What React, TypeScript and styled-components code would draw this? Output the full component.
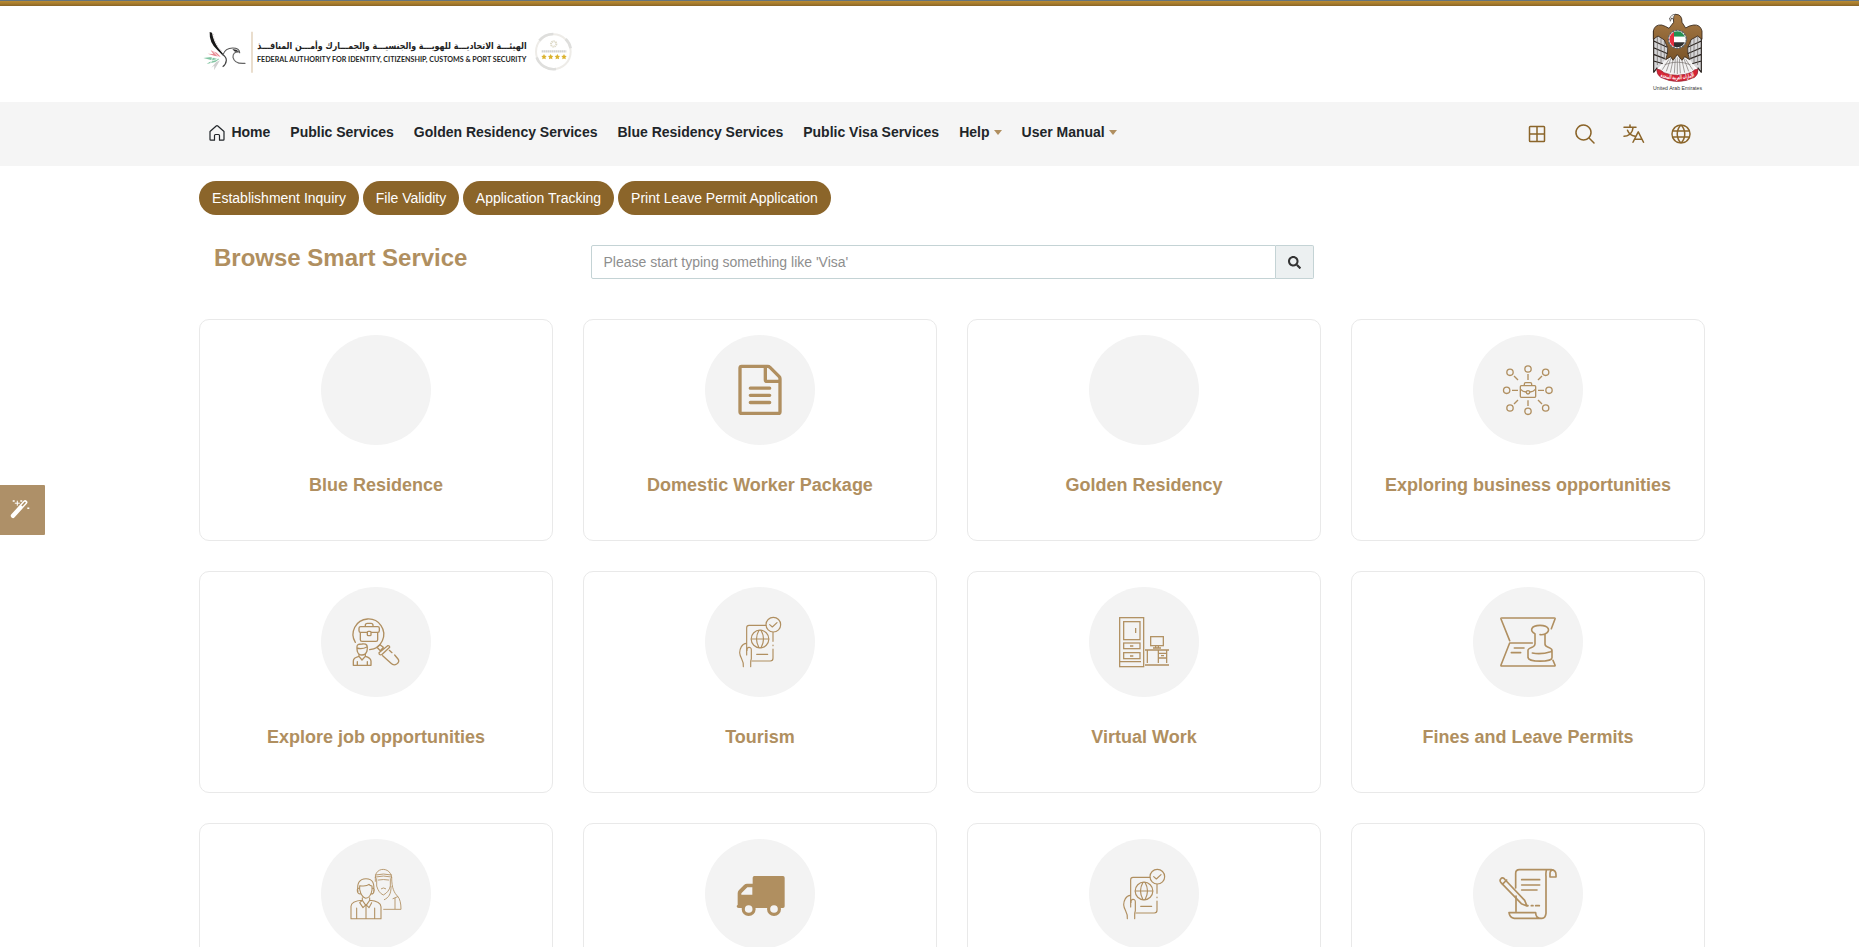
import React from "react";
import styled, { createGlobalStyle } from "styled-components";
import { FaSearch } from "react-icons/fa";
import { PiGlobe, PiGridFour, PiMagnifyingGlass, PiTranslate } from "react-icons/pi";

const GOLD = "#b08f60";
const BRONZE = "#8b652a";

const GlobalStyle = createGlobalStyle`
  *, *::before, *::after { box-sizing: border-box; }
  html, body { margin: 0; height: 100%; overflow: hidden; background: #fff; }
  body { font-family: "Liberation Sans", Arial, sans-serif; color: #212529; }
`;

const Page = styled.div`
  height: 947px;
  overflow: hidden;
  position: relative;
`;

const TopBar = styled.div`
  height: 6px;
  border-top: 1px solid #66747c;
  background: linear-gradient(#b98c35, #a67a2b 55%, #87642a);
`;

const Header = styled.header`
  height: 96px;
  padding: 0 154px 0 199px;
  display: flex;
  justify-content: space-between;
`;

const AuthorityLogo = styled.svg`
  width: 380px;
  height: 60px;
  margin-top: 14px;
`;

const Emblem = styled.svg`
  width: 56px;
  height: 84px;
  margin-top: 4px;
`;

const NavBar = styled.nav`
  height: 64px;
  background: #f5f5f5;
  padding: 0 166px 0 209px;
  display: flex;
  justify-content: space-between;
`;

const NavLinks = styled.div`
  display: flex;
  gap: 20px;
  height: 60px;
  align-items: center;
`;

const NavLink = styled.a`
  display: flex;
  align-items: center;
  font-size: 14px;
  font-weight: 700;
  color: #212529;
  white-space: nowrap;
`;

const HomeIcon = styled.svg`
  width: 16px;
  height: 16px;
  margin-right: 6.4px;
  margin-top: 2px;
`;

const Caret = styled.span`
  margin-left: 4px;
  border: 4.5px solid transparent;
  border-top: 5px solid ${GOLD};
  border-bottom: 0;
`;

const NavTools = styled.div`
  display: flex;
  align-items: center;
  gap: 24px;
  padding-bottom: 1px;
  height: 64px;
  color: ${BRONZE};
  svg { width: 24px; height: 24px; }
`;

const Content = styled.main`
  padding: 15px 154px 0 199px;
`;

const Pills = styled.div`
  display: flex;
  gap: 4px;
`;

const Pill = styled.button<{ $w: number }>`
  width: ${(p) => p.$w}px;
  height: 34px;
  border: 0;
  border-radius: 17px;
  padding: 0;
  background: ${BRONZE};
  color: #fff;
  font: 14px "Liberation Sans", Arial, sans-serif;
  white-space: nowrap;
`;

const Browse = styled.div`
  display: flex;
  margin-top: 30px;
  height: 34px;
`;

const Title = styled.h1`
  margin: 0;
  width: 392px;
  padding-left: 15px;
  font-size: 24px;
  line-height: 26px;
  color: ${GOLD};
`;

const SearchInput = styled.input`
  width: 685px;
  height: 34px;
  border: 1px solid #c4d3d5;
  border-radius: 2px 0 0 2px;
  padding: 0 12px 0 11.5px;
  font: 14px "Liberation Sans", Arial, sans-serif;
  &::placeholder { color: #8e8e8e; opacity: 1; }
`;

const SearchButton = styled.button`
  width: 38px;
  height: 34px;
  border: 1px solid #c4d3d5;
  border-left: 0;
  border-radius: 0 2px 2px 0;
  background: #ecf0f1;
  color: #333;
  padding: 0 1px 0 0;
  display: flex;
  align-items: center;
  justify-content: center;
  font-size: 13px;
`;

const Grid = styled.section`
  margin-top: 40px;
  display: grid;
  grid-template-columns: repeat(4, 354px);
  grid-auto-rows: 222px;
  gap: 30px;
`;

const Card = styled.article`
  border: 1px solid #e9e9e9;
  border-radius: 10px;
  padding-top: 15px;
  display: flex;
  flex-direction: column;
  align-items: center;
`;

const IconDisc = styled.div`
  width: 110px;
  height: 110px;
  border-radius: 50%;
  background: #f3f3f3;
  svg { display: block; width: 110px; height: 110px; }
`;

const CardTitle = styled.h2`
  margin: 29px 0 0;
  font-size: 18px;
  line-height: 22px;
  color: ${GOLD};
  white-space: nowrap;
`;

const SideTool = styled.button`
  position: absolute;
  left: 0;
  top: 485px;
  width: 45px;
  height: 50px;
  border: 0;
  border-radius: 0 1px 1px 0;
  background: #ae9068;
  padding: 0;
  svg { display: block; width: 45px; height: 50px; }
`;

type LineProps = { box: string; width?: number; children: React.ReactNode };
const LineIcon = ({ box, width = 4, children }: LineProps) => (
  <svg viewBox={box} fill="none" stroke={GOLD} strokeWidth={width} strokeLinecap="round" strokeLinejoin="round">
    {children}
  </svg>
);

const FileIcon = () => (
  <LineIcon box="15 45 330 330" width={10}>
    <path d="M125 139H203Q207 139 210 142L237 169Q240 172 240 176V275Q240 280 235 280H125Q120 280 120 275V144Q120 139 125 139Z" />
    <path d="M196 141V179Q196 184 201 184H238M151 204.500H209M151 226H209M151 247.500H209" />
  </LineIcon>
);

const BusinessIcon = () => (
  <LineIcon box="-21 15 330 330">
    {[[144, 117], [197, 127], [207, 181], [197, 234], [144, 244], [90, 234], [80, 181], [90, 127]].map(([x, y]) => (
      <circle key={`${x}-${y}`} cx={x} cy={y} r="9.500" />
    ))}
    <path strokeLinecap="butt" d="M144 132V150M144 211V228M96 181H114M174 181H192M102 138L114 150M186 138L174 150M102 222L114 210M186 222L174 210" />
    <rect x="121" y="167" width="46" height="35" rx="3" />
    <path d="M133 165V162Q133 158 137 158H151Q155 158 155 162V165M122 178Q128 185 138 186M166 178Q160 185 150 186" />
    <circle cx="144" cy="187" r="5" />
  </LineIcon>
);

const JobIcon = () => (
  <LineIcon box="33 21 330 330">
    <path d="M136 187A46 46 0 1 1 217 182M217 182Q205 207 179 209" />
    <rect x="147" y="140" width="61" height="17" rx="5" />
    <path d="M151 158V179Q151 184 156 184H198Q203 184 203 179V158M166 139V136Q166 130 172 130H183Q189 130 189 136V139" />
    <rect x="172" y="154" width="11" height="13" rx="3" fill="#f3f3f3" />
    <path d="M142 214C138 192 144 192 156 192C170 190 174 195 171 213C168 222 162 225 156 225C150 225 144 221 142 214ZM141 204Q155 209 171 201" />
    <path d="M147 223V229Q130 233 130 243V256H183V243Q182 233 166 229V223M147 229L156 240L166 229M142 245V256M172 245V256" />
    <path d="M201 202L210 194L220 202L211 212ZM207 218L233 197Q239 196 239 202L215 224Q207 226 207 218M218 227L243 250Q251 258 260 252Q270 245 264 237L254 225M238 211L246 218" />
  </LineIcon>
);

const PassportIcon = () => (
  <LineIcon box="15 21 330 330" width={3.5}>
    <path d="M140 225V143Q140 136 147 136H198M219 157V184M219 195V197M219 207V235Q219 243 211 243H156M170 223H203" />
    <circle cx="180" cy="177" r="26.500" />
    <path d="M154 177H206M177 151Q162 177 177 203M183 151Q198 177 183 203" />
    <circle cx="220" cy="134" r="22" />
    <path d="M209 134L217 141L231 128" />
    <path d="M139 190C126 190 119 207 119 218C120 235 132 239 130 260M141 211C139 200 154 199 154 209V236C150 246 153 252 152 260" />
  </LineIcon>
);

const OfficeIcon = () => (
  <LineIcon box="27 21 330 330" width={3.8}>
    <g strokeLinejoin="miter" strokeLinecap="butt">
      <rect x="119" y="113" width="72" height="147" />
      <rect x="131" y="125" width="49" height="54" />
      <rect x="131" y="189" width="49" height="17" />
      <rect x="131" y="218" width="49" height="18" />
      <path d="M167 144V159M150 198H160M150 228H160M120 245H183M195 210H267M195 255H267M202 212V249M235 212V249M260 212V249M236 220H259M236 234H259M243 227H252" />
      <rect x="212" y="170" width="38" height="27" />
      <path d="M227 198V203M235 198V203M219 204H243" />
    </g>
  </LineIcon>
);

const StampIcon = () => (
  <LineIcon box="39 21 330 330" width={4.8}>
    <path d="M149 182L123 117Q122 114 125 114H283Q286 114 285 117L274 146M217 189H149L123 255Q122 258 125 258H283Q286 258 285 255L279 241M163 204H192M154 218H182" />
    <path d="M225 161C208 154 212 136 240 136C268 136 273 154 255 162Q248 165 240 164M225 162V192Q225 198 218 201C209 204 204 207 204 211V233C205 247 276 247 276 233V211C276 207 271 204 263 201Q255 198 255 192V162M217 219Q244 224 272 215Q277 213 275 208" />
  </LineIcon>
);

const PeopleIcon = () => (
  <LineIcon box="0 0 330 330" width={3.2}>
    <path d="M111 159C107 135 114 119 135 119C156 119 161 134 158 159M116 151V140Q137 143 144 136Q147 140 153 141V153Q149 176 134 178Q121 174 116 151M115 148Q108 146 109 156Q110 165 118 165M154 148Q162 147 159 157Q158 165 151 165" />
    <path d="M124 176V184Q91 186 90 202V239H180V203Q179 187 146 184V176M124 184L135 200L146 184M124 184L116 191L126 206L135 197L144 206L152 191M135 201V238M107 207V238M161 207V238" />
    <g strokeWidth="2.600">
      <path d="M163 116C161 83 210 82 212 116M163 108Q187 102 212 108M163 114Q187 108 212 114" />
      <path d="M167 119V141Q173 162 187 168Q204 159 208 141V119M172 123Q187 120 203 123M181 149Q187 144 194 149M163 116V127M212 116C212 148 220 162 230 172Q240 183 240 211H188M210 142C211 165 203 176 190 182M222 178V209M230 173L216 179" />
    </g>
  </LineIcon>
);

const TruckIcon = () => (
  <svg viewBox="0 0 330 330">
    <path fill={GOLD} fillRule="evenodd" d="M148 111H234Q239 111 239 116V202Q239 207 234 207H101Q95 207 95 202Q95 199 98 198V163Q98 157 102 153L117 138Q121 134 126 134H143V116Q143 111 148 111ZM142 145H127L109 163V167H142Z" />
    <circle cx="131" cy="210" r="21" fill={GOLD} />
    <circle cx="207" cy="210" r="21" fill={GOLD} />
    <circle cx="131" cy="210" r="11.500" fill="#f3f3f3" />
    <circle cx="207" cy="210" r="11.500" fill="#f3f3f3" />
  </svg>
);

const ScrollIcon = () => (
  <LineIcon box="0 0 330 330" width={5}>
    <path d="M128 147V103Q128 92 139 92H235Q249 94 249 107V114H231V106Q230 93 242 93M129 171V217M220 94Q218 103 219 112V223Q217 238 207 238H124Q110 236 108 221H188Q188 237 204 238" />
    <path d="M146 122H200M146 138H200M146 153H192M163 200H165M175 200H180M188 200H199" />
    <path d="M83 120Q89 112 97 123L155 184L162 201L145 194L84 131Q79 125 83 120ZM88 136L101 123" />
  </LineIcon>
);

const cards: { title: string; icon?: React.ReactNode }[] = [
  { title: "Blue Residence" },
  { title: "Domestic Worker Package", icon: <FileIcon /> },
  { title: "Golden Residency" },
  { title: "Exploring business opportunities", icon: <BusinessIcon /> },
  { title: "Explore job opportunities", icon: <JobIcon /> },
  { title: "Tourism", icon: <PassportIcon /> },
  { title: "Virtual Work", icon: <OfficeIcon /> },
  { title: "Fines and Leave Permits", icon: <StampIcon /> },
  { title: "", icon: <PeopleIcon /> },
  { title: "", icon: <TruckIcon /> },
  { title: "", icon: <PassportIcon /> },
  { title: "", icon: <ScrollIcon /> },
];

const Logo = () => (
  <AuthorityLogo viewBox="27 60 1140 180">
    <path fill="#171717" d="M59 96Q57 128 82 150L97 165L99 161L84 143Q70 122 66 98Z" />
    <path fill="none" stroke="#a99" strokeWidth="1.500" strokeDasharray="3 4" d="M70 102Q73 132 98 155" />
    <path fill="none" stroke="#555" strokeWidth="3.500" strokeLinecap="round" d="M99 164C104 150 113 144 128 144Q148 144 149 158" />
    <path fill="none" stroke="#666" strokeWidth="3.500" strokeLinecap="round" d="M147 156Q128 155 129 172Q134 193 165 190" />
    <path fill="none" stroke="#444" strokeWidth="3.500" d="M96 163Q109 170 109 181Q108 193 98 200" />
    <path fill="#333" d="M127 148Q138 146 147 155L135 155Z" />
    <path fill="#e98b93" d="M62 151L80 158L92 170L75 168L53 161L70 162Z" />
    <path fill="#82c5a2" d="M40 174L64 171L88 177L76 186L50 192L66 181Z" />
    <path fill="none" stroke="#fff" strokeWidth="2.500" d="M54 168L84 176M57 185L82 178M69 154L86 171M68 170L62 190" />
    <path fill="#cfcfcf" d="M90 181L82 194L72 211L73 197L64 203L78 187Z" />
    <path stroke="#dfcdb4" strokeWidth="4" d="M186 95V218" />
    <text x="1010" y="147" direction="rtl" textLength="808" lengthAdjust="spacingAndGlyphs" fontFamily="DejaVu Sans, sans-serif" fontWeight="700" fontSize="28" fill="#222">
      الهيئـــة الاتحاديـــة للهويـــة والجنسيـــة والجمـــارك وأمـــن المنافـــذ
    </text>
    <text x="201" y="185" textLength="808" lengthAdjust="spacingAndGlyphs" fontFamily="Lato, sans-serif" fontWeight="700" fontSize="23.500" fill="#262626">
      FEDERAL AUTHORITY FOR IDENTITY, CITIZENSHIP, CUSTOMS &amp; PORT SECURITY
    </text>
    <circle cx="1090" cy="155" r="52" fill="none" stroke="#eeece8" strokeWidth="6" />
    <path fill="none" stroke="#dededc" strokeWidth="8" d="M1048 122A53 53 0 0 1 1090 102M1040 172A53 53 0 0 0 1098 207M1127 117A53 53 0 0 1 1142 145" />
    <circle cx="1091" cy="132" r="8" fill="none" stroke="#dedac8" strokeWidth="6" strokeDasharray="4 2" />
    <path stroke="#d1d1d1" strokeWidth="7" strokeDasharray="5 1" d="M1055 154H1129" />
    {[1062, 1082, 1102, 1122].map((x) => (
      <path key={x} fill="#dbb22e" d={`M${x} 162l2.600 5 5.600 1-4 4 1 6-5.200-2.500-5.200 2.500 1-6-4-4 5.600-1z`} />
    ))}
  </AuthorityLogo>
);

const EmblemArt = () => (
  <Emblem viewBox="447 30 168 252">
    <defs>
      <linearGradient id="wing" x1="0" y1="0" x2="0" y2="1">
        <stop offset="0" stopColor="#a87b46" />
        <stop offset="1" stopColor="#7b5428" />
      </linearGradient>
      <clipPath id="shield"><circle cx="532" cy="118" r="24" /></clipPath>
    </defs>
    <path fill="#d6d6d8" d="M460 93L493 111L507 170L478 200L461 217ZM606 93L572 111L558 170L586 200L604 217Z" />
    <path stroke="#29231f" strokeWidth="3.500" fill="none" d="M461 93V218M461 123L502 142M461 143L503 161M461 163L500 178M461 183L492 192M461 217L472 203M604 93V218M604 123L563 142M604 143L562 161M604 163L565 178M604 183L573 192M604 217L593 203" />
    <path stroke="#66615e" strokeWidth="2" fill="none" d="M472 109V195M483 115V188M493 120V181M593 109V195M582 115V188M572 120V181" />
    <path fill="#f3f3f3" d="M500 166L479 210Q532 236 586 210L565 166Z" />
    <path stroke="#77716e" strokeWidth="2" fill="none" d="M507 178L487 209M513 174L499 214M519 181L511 218M526 175L523 220M532 172V222M538 175L541 220M546 181L554 218M551 174L566 214M557 178L578 209M494 194Q532 179 571 194" />
    <path fill="url(#wing)" stroke="#33251b" strokeWidth="2.500" d="M521 67L507 85Q496 78 485 75Q464 73 460 93V118L474 108L493 120Q498 133 503 143Q505 158 497 179L512 170L519 181L532 164L546 181L554 170L569 179Q561 158 563 142Q569 132 573 119L593 108L606 118V93Q601 73 581 75Q566 77 557 84L546 67Q547 43 527 43Q516 44 509 57L520 55Z" />
    <path fill="#eee" stroke="#222" strokeWidth="1.500" d="M509 56Q513 43 526 43Q519 50 521 57L514 55L511 64Z" />
    <circle cx="532" cy="118" r="27" fill="#f8f8f8" stroke="#59616a" strokeWidth="4" strokeDasharray="7 3" />
    <g clipPath="url(#shield)">
      <path fill="#239052" d="M520 90H560V110H520Z" />
      <path fill="#fff" d="M520 110H560V127H520Z" />
      <path fill="#303030" d="M520 127H560V146H520Z" />
      <path fill="#e52e3e" d="M505 90H522V146H505Z" />
    </g>
    <path fill="#d52334" stroke="#8d2634" strokeWidth="2" d="M470 207Q480 207 492 218Q532 234 575 217Q584 207 594 207Q595 224 584 232Q532 257 482 232Q470 224 470 207Z" />
    <path id="ribbon" fill="none" d="M474 227Q532 250 591 226" />
    <text fontFamily="DejaVu Sans, sans-serif" fontSize="18" fontWeight="700" fill="#fff" textAnchor="middle">
      <textPath href="#ribbon" startOffset="50%" textLength="104" lengthAdjust="spacingAndGlyphs">الإمارات العربية المتحدة</textPath>
    </text>
    <text x="459" y="269" textLength="147" lengthAdjust="spacingAndGlyphs" fontFamily="Liberation Sans, sans-serif" fontSize="17" fill="#333">
      United Arab Emirates
    </text>
  </Emblem>
);

export default function App() {
  return (
    <Page>
      <GlobalStyle />
      <TopBar />
      <Header>
        <Logo />
        <EmblemArt />
      </Header>
      <NavBar>
        <NavLinks>
          <NavLink>
            <HomeIcon viewBox="0 0 16 16" fill="none" stroke="#212529" strokeWidth="1.200" strokeLinejoin="round">
              <path d="M1 6.500L7.200 1Q8 .4 8.800 1L15 6.500V14.400Q15 15.200 14.200 15.200H10.500V10.500Q10.500 9.500 9.500 9.500H6.500Q5.500 9.500 5.500 10.500V15.200H1.800Q1 15.200 1 14.400Z" />
            </HomeIcon>
            Home
          </NavLink>
          <NavLink>Public Services</NavLink>
          <NavLink>Golden Residency Services</NavLink>
          <NavLink>Blue Residency Services</NavLink>
          <NavLink>Public Visa Services</NavLink>
          <NavLink>Help<Caret /></NavLink>
          <NavLink>User Manual<Caret /></NavLink>
        </NavLinks>
        <NavTools>
          <PiGridFour />
          <PiMagnifyingGlass />
          <PiTranslate />
          <PiGlobe />
        </NavTools>
      </NavBar>
      <Content>
        <Pills>
          <Pill $w={160}>Establishment Inquiry</Pill>
          <Pill $w={96}>File Validity</Pill>
          <Pill $w={151}>Application Tracking</Pill>
          <Pill $w={213}>Print Leave Permit Application</Pill>
        </Pills>
        <Browse>
          <Title>Browse Smart Service</Title>
          <SearchInput placeholder="Please start typing something like 'Visa'" />
          <SearchButton><FaSearch /></SearchButton>
        </Browse>
        <Grid>
          {cards.map((card, i) => (
            <Card key={i}>
              <IconDisc>{card.icon}</IconDisc>
              {card.title && <CardTitle>{card.title}</CardTitle>}
            </Card>
          ))}
        </Grid>
      </Content>
      <SideTool>
        <svg viewBox="0 0 45 50">
          <path d="M13 30.800L25.200 17.300" stroke="#fff" strokeWidth="4.400" strokeLinecap="round" />
          <path d="M22.300 20.500L25 17.500" stroke="#ae9068" strokeWidth="1.600" strokeLinecap="round" />
          <path d="M17.300 15.700v5M14.800 18.200h5" stroke="#fff" strokeWidth="1" />
          <path d="M12.700 16h2M20.300 16h2M27.300 23.300h2" stroke="#fff" strokeWidth="1.500" />
        </svg>
      </SideTool>
    </Page>
  );
}
